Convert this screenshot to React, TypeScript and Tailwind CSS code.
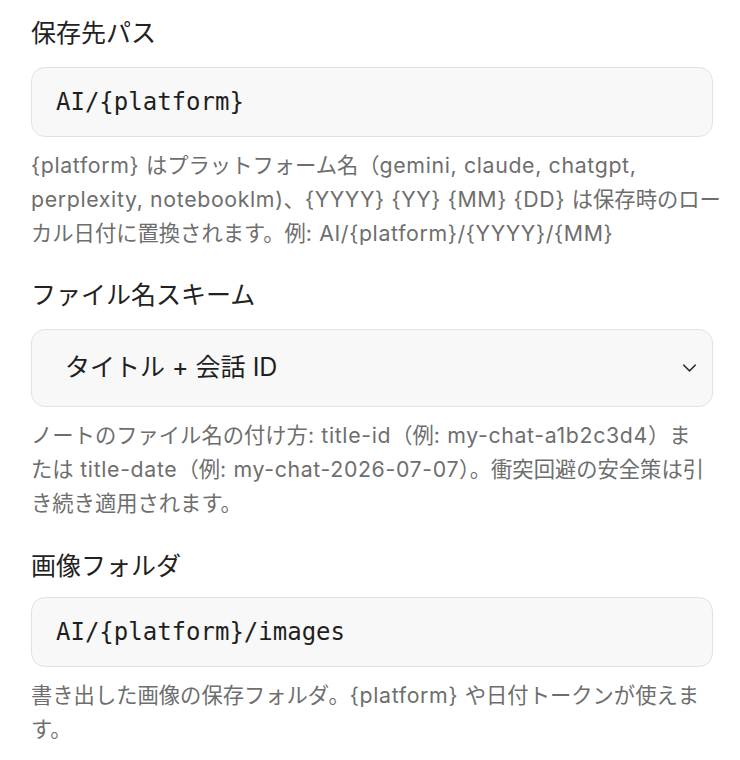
import React from "react";
import { ChevronDown } from "lucide-react";

const sans = { fontFamily: 'Inter, "Noto Sans CJK JP", sans-serif' };

function Label({ children }: { children: React.ReactNode }) {
  return (
    <div className="text-[25px] leading-[35px] text-[#222222]" style={sans}>
      {children}
    </div>
  );
}

function Runs({ text }: { text: string }) {
  const runs = text.match(/[\x20-\x7e]+|[^\x20-\x7e]+/g) ?? [];
  return (
    <>
      {runs.map((r, i) =>
        /^[\x20-\x7e]+$/.test(r) ? (
          <span key={i} className="tracking-[0.65px]">
            {r}
          </span>
        ) : (
          <span key={i}>{r}</span>
        )
      )}
    </>
  );
}

function Help({ lines }: { lines: string[] }) {
  return (
    <p className="mt-[11px] text-[21.3px] leading-[34px] text-[#6e6e6e]" style={sans}>
      {lines.map((l, i) => (
        <span key={i} className="block whitespace-nowrap">
          <Runs text={l} />
        </span>
      ))}
    </p>
  );
}

function TextInput({ value, className = "" }: { value: string; className?: string }) {
  return (
    <input
      readOnly
      value={value}
      className={`block h-[70px] w-full rounded-[14px] border border-[#e2e2e2] bg-[#f8f8f8] pl-[24px] text-[24px] text-[#1f1f1f] outline-none ${className}`}
      style={{ fontFamily: '"DejaVu Sans Mono", monospace' }}
    />
  );
}

export default function App() {
  return (
    <div className="min-h-[760px] w-[740px] bg-white pl-[31px] pr-[27px] pt-[16px]">
      <section>
        <Label>保存先パス</Label>
        <TextInput value="AI/{platform}" className="mt-[16px]" />
        <Help
          lines={[
            "{platform} はプラットフォーム名（gemini, claude, chatgpt,",
            "perplexity, notebooklm)、{YYYY} {YY} {MM} {DD} は保存時のロー",
            "カル日付に置換されます。例: AI/{platform}/{YYYY}/{MM}",
          ]}
        />
      </section>

      <section className="mt-[28px]">
        <Label>ファイル名スキーム</Label>
        <div className="relative mt-[16px]">
          <select
            defaultValue="title-id"
            className="block h-[78px] w-full appearance-none rounded-[14px] border border-[#e2e2e2] bg-[#f8f8f8] pl-[33px] text-[25px] text-[#1f1f1f] outline-none"
            style={sans}
          >
            <option value="title-id">タイトル + 会話 ID</option>
            <option value="title-date">タイトル + 日付</option>
          </select>
          <ChevronDown
            className="pointer-events-none absolute right-[12px] top-1/2 -translate-y-1/2 text-[#333333]"
            size={23}
            strokeWidth={1.5}
          />
        </div>
        <Help
          lines={[
            "ノートのファイル名の付け方: title-id（例: my-chat-a1b2c3d4）ま",
            "たは title-date（例: my-chat-2026-07-07）。衝突回避の安全策は引",
            "き続き適用されます。",
          ]}
        />
      </section>

      <section className="mt-[29px]">
        <Label>画像フォルダ</Label>
        <TextInput value="AI/{platform}/images" className="mt-[13px]" />
        <Help lines={["書き出した画像の保存フォルダ。{platform} や日付トークンが使えま", "す。"]} />
      </section>
    </div>
  );
}
